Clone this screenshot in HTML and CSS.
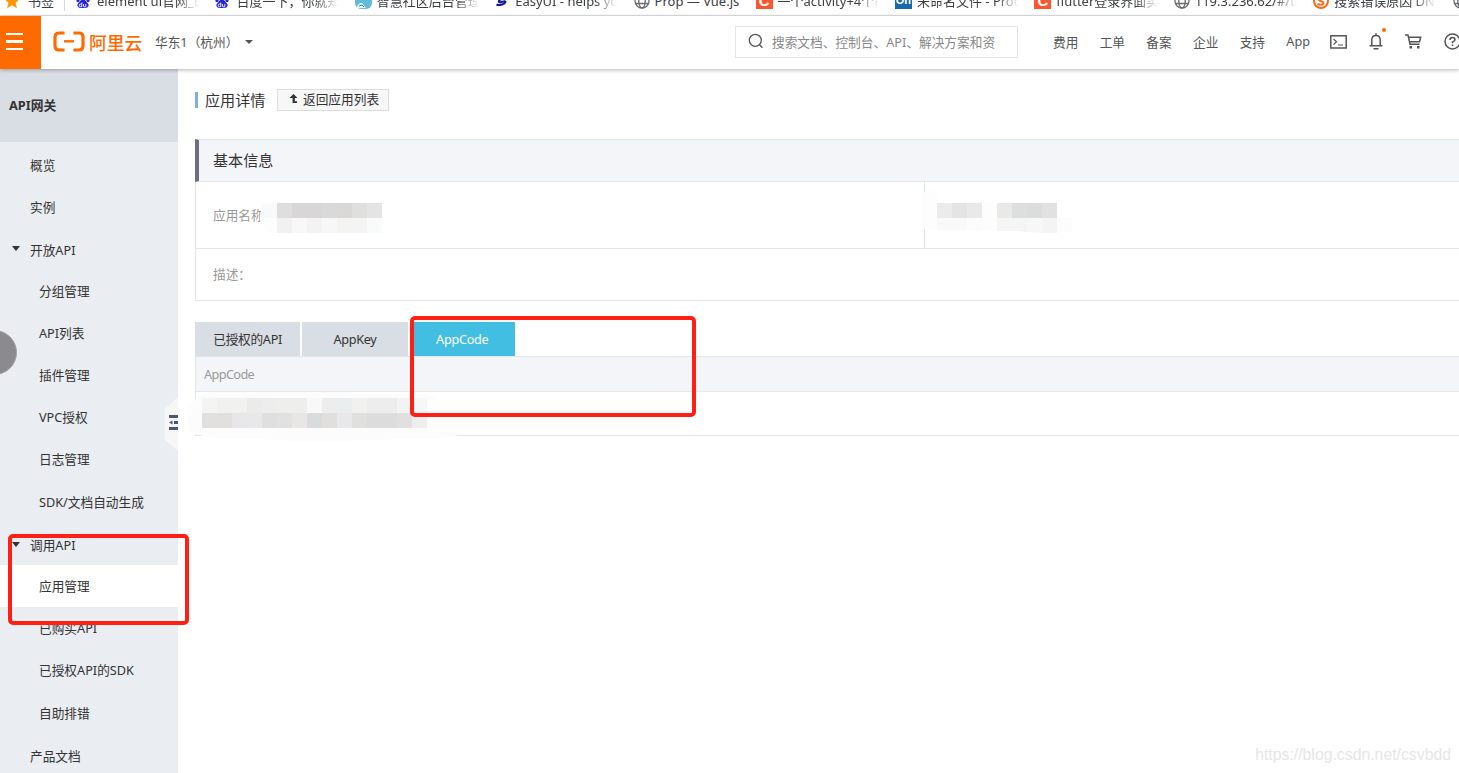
FILE: index.html
```html
<!DOCTYPE html>
<html lang="zh-CN">
  <head>
    <meta charset="UTF-8" />
    <meta name="viewport" content="width=device-width, initial-scale=1.0" />
    <title>API网关</title>
    <link rel="stylesheet" href="styles.css">
  </head>
  <body>
    <svg class="symbols">
      <symbol id="paw" viewBox="0 0 14 16">
        <ellipse cx="2" cy="7" rx="1.7" ry="2.3" />
        <ellipse cx="5" cy="3" rx="1.7" ry="2.5" />
        <ellipse cx="9" cy="3" rx="1.7" ry="2.5" />
        <ellipse cx="12" cy="7" rx="1.7" ry="2.3" />
        <path d="M7 6.5c2 0 3 2 4.500 3.500 3 3-.5 5.500-2.500 5H5c-2 .5-5.500-2-2.500-5C4 8.500 5 6.500 7 6.500z" />
        <path d="M5.800 9.500v4.200H4.500a1.200 1.200 0 0 1 0-2.700h1.300M7.500 11v2q0 .8.800.8h1.500V11" fill="none" stroke="#fff" stroke-width=".9" />
      </symbol>
      <symbol id="globe" viewBox="0 0 16 16">
        <g fill="none" stroke="#6b6d70" stroke-width="1.300">
          <circle cx="8" cy="8" r="7" />
          <ellipse cx="8" cy="8" rx="3.200" ry="7" />
          <path d="M1.500 5.500h13M1.500 10.500h13" />
        </g>
      </symbol>
    </svg>

    <div class="bookmarks">
      <div class="bookmarks-row">
        <div class="bookmark bookmark-first">
          <svg width="16" height="16" viewBox="0 0 16 16"><path fill="#ff9800" d="M8 .5l2.300 5 5.500.5-4.200 3.700 1.300 5.500L8 12.300l-4.900 2.900 1.300-5.500L.2 6l5.500-.5z" /></svg>
          <span>书签</span>
        </div>
        <div class="bookmark"><svg class="paw" width="14" height="16"><use href="#paw" /></svg><span>element ui官网_Element</span></div>
        <div class="bookmark"><svg class="paw" width="14" height="16"><use href="#paw" /></svg><span>百度一下，你就知道</span></div>
        <div class="bookmark">
          <svg width="17" height="16" viewBox="0 0 17 16"><rect width="17" height="16" rx="6" fill="#62b9d8" /><path d="M2 15c0-3 2-5 5-5l4 5z" fill="#e6f6fb" /><path d="M4 13l3-1 2 2" stroke="#2c8bb5" fill="none" /></svg>
          <span>智慧社区后台管理系统</span>
        </div>
        <div class="bookmark">
          <svg width="16" height="16" viewBox="0 0 16 16"><path d="M12 5C7 5 4 8 5 9s7-2 6.500 0-6 4-9 2.500" fill="none" stroke="#151a93" stroke-width="2" /></svg>
          <span>EasyUI - helps you build</span>
        </div>
        <div class="bookmark bookmark-short"><svg width="16" height="16"><use href="#globe" /></svg><span>Prop — Vue.js</span></div>
        <div class="bookmark"><i class="favicon favicon-c">C</i><span>一个activity+4个fragment</span></div>
        <div class="bookmark"><i class="favicon favicon-on">On</i><span>未命名文件 - ProcessOn</span></div>
        <div class="bookmark"><i class="favicon favicon-c">C</i><span>flutter登录界面实现</span></div>
        <div class="bookmark"><svg width="16" height="16"><use href="#globe" /></svg><span>119.3.236.62/#/table</span></div>
        <div class="bookmark">
          <svg width="16" height="16" viewBox="0 0 16 16"><circle cx="8" cy="8" r="7" fill="none" stroke="#f76b1c" stroke-width="2" /><path d="M11 5C8 3.500 5 4.500 5.500 6.500S11 8 10.500 10.200 6 12 4.500 10.800" fill="none" stroke="#f76b1c" stroke-width="2" /></svg>
          <span>搜索错误原因 DNS_PROBE</span>
        </div>
        <div class="bookmark"><svg width="16" height="16"><use href="#globe" /></svg></div>
      </div>
    </div>

    <header class="topbar">
      <div class="menu-button"><i></i><i></i><i></i></div>
      <div class="logo">
        <svg width="32" height="21" viewBox="0 0 32 21">
          <g fill="none" stroke="#ff6a00">
            <path d="M11.500 2H6Q2 2 2 6v9q0 4 4 4h5.500M20.500 2H26q4 0 4 4v9q0 4-4 4h-5.500" stroke-width="3.200" />
            <path d="M11 10.300h10" stroke-width="2.400" />
          </g>
        </svg>
        <span>阿里云</span>
      </div>
      <div class="region">华东1（杭州）<i class="caret"></i></div>
      <div class="search">
        <svg width="16" height="16" viewBox="0 0 16 16"><g fill="none" stroke="#555" stroke-width="1.300"><circle cx="7.300" cy="7.300" r="6" /><path d="M11.500 11.800l3 3" /></g></svg>
        <span>搜索文档、控制台、API、解决方案和资</span>
      </div>
      <nav class="topnav">
        <a>费用</a><a>工单</a><a>备案</a><a>企业</a><a>支持</a><a>App</a>
      </nav>
      <div class="tools">
        <svg width="17" height="14" viewBox="0 0 17 14"><g fill="none" stroke="#555" stroke-width="1.500"><rect x=".8" y=".8" width="15.400" height="12.200" /><path d="M3.500 4l3 2.800-3 2.800M8 10h5" stroke-width="1.200" /></g></svg>
        <div class="bell">
          <svg width="14" height="17" viewBox="0 0 14 17"><g fill="none" stroke="#555" stroke-width="1.500"><path d="M2.800 12.300V7q0-4.500 4.200-4.500T11.200 7v5.300M.5 12.700h13M7 .3v2M4.500 15.700h5" /></g></svg>
        </div>
        <svg width="17" height="15" viewBox="0 0 17 15"><g fill="none" stroke="#555" stroke-width="1.500"><path d="M0 1h3l2 9.200h9.500M3.400 3.200h12.300l-1.200 4.500H4.600" /></g><g fill="#555"><rect x="4.500" y="12" width="2.500" height="2.500" /><rect x="12" y="12" width="2.500" height="2.500" /></g></svg>
        <svg width="17" height="17" viewBox="0 0 17 17"><g fill="none" stroke="#555" stroke-width="1.500"><circle cx="8.500" cy="8.500" r="7.500" /><path d="M6 7q0-2.500 2.500-2.500T11 6.800Q11 8 8.500 9v1.200M8.500 11.500v1.500" stroke-width="1.600" /></g></svg>
      </div>
    </header>

    <div class="layout">
      <aside class="sidebar">
        <h2 class="sidebar-title">API网关</h2>
        <ul class="menu">
          <li class="menu-item">概览</li>
          <li class="menu-item">实例</li>
          <li class="menu-item menu-group">开放API</li>
          <li class="menu-item menu-sub">分组管理</li>
          <li class="menu-item menu-sub">API列表</li>
          <li class="menu-item menu-sub">插件管理</li>
          <li class="menu-item menu-sub">VPC授权</li>
          <li class="menu-item menu-sub">日志管理</li>
          <li class="menu-item menu-sub">SDK/文档自动生成</li>
          <li class="menu-item menu-group">调用API</li>
          <li class="menu-item menu-sub active">应用管理</li>
          <li class="menu-item menu-sub">已购买API</li>
          <li class="menu-item menu-sub">已授权API的SDK</li>
          <li class="menu-item menu-sub">自助排错</li>
          <li class="menu-item">产品文档</li>
        </ul>
      </aside>

      <main class="content">
        <div class="page-head">
          <h1>应用详情</h1>
          <button class="back-button">
            <svg width="9" height="9" viewBox="0 0 9 10"><path fill="#333" d="M4.500 0L9 4.500H6V8h2.500v2h-5V4.500H0z" /></svg>
            返回应用列表
          </button>
        </div>

        <section class="panel">
          <h3 class="panel-title">基本信息</h3>
          <div class="panel-row">
            <div class="panel-cell">应用名称</div>
            <div class="panel-cell panel-cell-id"></div>
          </div>
          <div class="panel-row panel-row-last">
            <div class="panel-cell">描述：</div>
          </div>
        </section>

        <div class="tabs">
          <div class="tab">已授权的API</div>
          <div class="tab">AppKey</div>
          <div class="tab tab-active">AppCode</div>
        </div>
        <div class="table">
          <div class="table-head">AppCode</div>
          <div class="table-body"></div>
        </div>
      </main>
    </div>

    <!-- collapse handle and floating ball -->
    <svg class="handle" width="13" height="54" viewBox="0 0 13 54">
      <path fill="#f7f7f7" d="M13 0v54L0 43V12z" />
      <path fill="#4a5870" d="M4 18h9v3H4zM4 30h9v3H4zM9 24h4v3H9zM7.500 23.500v4L4 25.500z" />
    </svg>
    <div class="ball"></div>

    <!-- masked values -->
    <svg class="mask mask-name" width="122" height="32" viewBox="0 0 122 32">
      <path fill="#fdfdfd" d="M2 0h15v30H10Q0 24 0 15z" />
      <rect x="2" y="1" width="15" height="14" fill="#f8f9f9" />
      <g>
        <rect x="17" width="15" height="15" fill="#dfdedf" /><rect x="32" width="30" height="15" fill="#d8d6d6" /><rect x="62" width="15" height="15" fill="#dad9d9" /><rect x="77" width="15" height="15" fill="#d9d8d7" /><rect x="92" width="15" height="15" fill="#dfdfdd" /><rect x="107" width="15" height="15" fill="#e3e4e3" />
        <rect x="17" y="15" width="15" height="15" fill="#f1f1f1" /><rect x="32" y="15" width="15" height="15" fill="#f8f8f8" /><rect x="47" y="15" width="15" height="15" fill="#f3f3f3" /><rect x="62" y="15" width="15" height="15" fill="#f7f7f7" /><rect x="77" y="15" width="15" height="15" fill="#f4f4f2" /><rect x="92" y="15" width="15" height="15" fill="#f4f4f4" /><rect x="107" y="15" width="15" height="15" fill="#f8fbfa" />
      </g>
    </svg>
    <svg class="mask mask-id" width="150" height="44" viewBox="0 0 150 44">
      <path fill="#fdfdfd" d="M0 3L15 0v41L0 37z" />
      <rect x="15" y="13" width="15" height="15" fill="#ebebea" /><rect x="30" y="13" width="15" height="15" fill="#e3e5e4" /><rect x="45" y="13" width="15" height="15" fill="#e9e9e8" />
      <rect x="60" y="13" width="15" height="28" fill="#fdfdfd" />
      <rect x="75" y="13" width="15" height="15" fill="#e9e9e7" /><rect x="90" y="13" width="15" height="15" fill="#dddee0" /><rect x="105" y="13" width="15" height="15" fill="#dbdddc" /><rect x="120" y="13" width="15" height="15" fill="#e1e1e1" />
      <path fill="#f9f9f9" d="M15 28h30v12H15z" /><path fill="#fcfcfc" d="M45 28h15v13H45zM135 28h15v14H135z" />
      <path fill="#f5f5f5" d="M75 28h30v14l-12-1H75z" /><path fill="#f7f7f7" d="M105 28h15v15l-15-1z" /><path fill="#f4f4f4" d="M120 28h15v15h-15z" />
    </svg>
    <svg class="mask mask-code" width="270" height="52" viewBox="0 0 270 52">
      <path fill="#fcfcfc" d="M12 5Q20 2 40 2h110q10 0 15 2h65q12 0 18 4l-8 4v30h25l5 3q-10 4-60 4-90 4-140 0-50 0-58-4l-10-2Q-2 26 2 14z" />
      <g>
        <rect x="14" y="8" width="15" height="15" fill="#f4f4f4" /><rect x="29" y="8" width="30" height="15" fill="#f1f1f0" /><rect x="59" y="8" width="15" height="15" fill="#ebebea" /><rect x="74" y="8" width="15" height="15" fill="#ededed" /><rect x="89" y="8" width="30" height="15" fill="#eeeeed" /><rect x="119" y="8" width="15" height="15" fill="#f8f8f8" /><rect x="134" y="8" width="15" height="15" fill="#ededed" /><rect x="149" y="8" width="15" height="15" fill="#ebeeee" /><rect x="164" y="8" width="15" height="15" fill="#f1f1ef" /><rect x="179" y="8" width="30" height="15" fill="#ecedec" /><rect x="209" y="8" width="15" height="15" fill="#f2f3f2" /><rect x="224" y="8" width="15" height="15" fill="#f7f7f7" />
        <rect x="14" y="23" width="30" height="15" fill="#e2e0df" /><rect x="44" y="23" width="15" height="15" fill="#e7e7ea" /><rect x="59" y="23" width="15" height="15" fill="#e8e8e8" /><rect x="74" y="23" width="15" height="15" fill="#dfdfdf" /><rect x="89" y="23" width="15" height="15" fill="#e1e1e1" /><rect x="104" y="23" width="15" height="15" fill="#e8e7e6" /><rect x="119" y="23" width="15" height="15" fill="#d9dcdc" /><rect x="134" y="23" width="15" height="15" fill="#e1dfde" /><rect x="149" y="23" width="15" height="15" fill="#e8e8eb" /><rect x="164" y="23" width="15" height="15" fill="#e0e0df" /><rect x="179" y="23" width="30" height="15" fill="#dbdcdb" /><rect x="209" y="23" width="15" height="15" fill="#e0e0e0" /><rect x="224" y="23" width="15" height="15" fill="#eeeeee" />
      </g>
    </svg>

    <!-- highlights -->
    <div class="marker marker-tab"></div>
    <div class="marker marker-menu"></div>
    <div class="watermark">https://blog.csdn.net/csvbdd</div>
  </body>
</html>
```
FILE: styles.css
```css
* {
  box-sizing: border-box;
}
body {
  position: relative;
  margin: 0;
  width: 1459px;
  height: 773px;
  overflow: hidden;
  background: #fff;
  color: #333;
  font-family: "Noto Sans", "Noto Sans CJK SC", sans-serif;
  font-size: 12.7px;
}
svg {
  display: block;
  flex: none;
}
.symbols {
  display: none;
}

/* browser bookmarks */
.bookmarks {
  display: flex;
  align-items: flex-end;
  height: 16px;
  overflow: hidden;
  border-bottom: 1px solid #e4e4e4;
}
.bookmarks-row {
  display: flex;
  align-items: center;
  flex: none;
  height: 29px;
  padding-left: 4px;
}
.bookmark {
  display: flex;
  align-items: center;
  flex: none;
  gap: 5px;
  width: 139.4px;
  font-size: 13px;
  line-height: 20px;
  color: #3c4043;
}
.bookmark span {
  width: 102px;
  height: 20px;
  overflow: hidden;
  white-space: nowrap;
  -webkit-mask-image: linear-gradient(to right, #000 78%, transparent);
  mask-image: linear-gradient(to right, #000 78%, transparent);
}
.bookmark-first {
  width: 61px;
  gap: 8px;
  margin-right: 11px;
  border-right: 1px solid #d5d7da;
}
.bookmark-short {
  width: 122px;
}
.bookmark-first span,
.bookmark-short span {
  width: auto;
  -webkit-mask-image: none;
  mask-image: none;
}
.paw {
  margin-right: 2px;
  fill: #2424d8;
}
.favicon {
  flex: none;
  width: 17px;
  height: 17px;
  overflow: hidden;
  color: #fff;
  font: bold 15px/17px "Liberation Sans", sans-serif;
  text-align: center;
}
.favicon-c {
  background: #fc5531;
}
.favicon-on {
  background: #1769a8;
  font-size: 11px;
}

/* console header */
.topbar {
  position: relative;
  display: flex;
  align-items: center;
  height: 53px;
  padding-bottom: 2px;
  background: #fff;
  color: #555;
  white-space: nowrap;
  box-shadow: 0 1px 4px rgba(0, 0, 0, 0.3);
}
.menu-button {
  display: flex;
  flex-direction: column;
  gap: 5px;
  width: 41px;
  height: 53px;
  margin-bottom: -2px;
  padding: 17px 0 0 6px;
  background: #ff6a00;
}
.menu-button i {
  width: 17px;
  height: 2.300px;
  background: #fff;
}
.logo {
  display: flex;
  align-items: center;
  gap: 4px;
  width: 114px;
  padding-left: 12px;
  color: #ff6a00;
  font-size: 17.8px;
  font-weight: 500;
}
.region {
  display: flex;
  align-items: center;
  width: 580px;
}
.caret {
  margin-left: 7px;
  border: 4.500px solid transparent;
  border-top-color: #555;
  border-bottom: 0;
}
.search {
  display: flex;
  align-items: center;
  gap: 8px;
  width: 283px;
  height: 32px;
  padding: 0 0 1px 12px;
  border: 1px solid #e6e6e6;
  color: #888;
}
.topnav {
  display: flex;
  gap: 21.300px;
  width: 277px;
  padding-left: 35px;
}
.tools {
  display: flex;
  align-items: center;
  margin-left: 35px;
  gap: 22px;
  width: 129px;
  overflow: hidden;
  padding: 6px 0;
}
.bell {
  position: relative;
}
.bell::after {
  content: "";
  position: absolute;
  top: -5px;
  right: -3px;
  width: 4px;
  height: 4px;
  border-radius: 50%;
  background: #ff6a00;
}

.layout {
  display: flex;
  height: 704px;
}

/* sidebar */
.sidebar {
  flex: none;
  width: 178px;
  background: #eaedf1;
}
.sidebar-title {
  height: 73px;
  margin: 0;
  padding-left: 9px;
  background: #d9dde4;
  font-size: 12.8px;
  line-height: 73px;
}
.menu {
  margin: 0;
  padding: 1px 0 0;
  list-style: none;
}
.menu-item {
  display: flex;
  align-items: center;
  position: relative;
  height: 42.200px;
  padding: 1px 0 0 30px;
}
.menu-sub {
  padding: 0 0 1px 39px;
}
.menu-group {
  padding-top: 2px;
}
.menu-group::before {
  content: "";
  position: absolute;
  left: 12px;
  top: 19px;
  border: 4.500px solid transparent;
  border-top: 5px solid #333;
  border-bottom: 0;
}
.active {
  padding-bottom: 0;
  background: #fff;
}

/* content */
.content {
  flex: 1;
  min-width: 0;
  padding: 19px 0 0 17px;
}
.page-head {
  display: flex;
  align-items: center;
  height: 23px;
}
.page-head h1 {
  width: 82px;
  margin: 0;
  padding-left: 7px;
  border-left: 3px solid #80b0e0;
  font-size: 15.1px;
  font-weight: 400;
  line-height: 16px;
}
.back-button {
  display: flex;
  align-items: center;
  gap: 5px;
  width: 112px;
  height: 22px;
  padding: 0 0 2px 11px;
  border: 1px solid #ddd;
  background: #f7f7f7;
  color: #333;
  font: inherit;
  white-space: nowrap;
}
.panel {
  height: 162px;
  margin-top: 28px;
  border: 1px solid #e1e6eb;
  border-right: 0;
  color: #999;
}
.panel-title {
  height: 43px;
  margin: -1px 0 0 -1px;
  padding-left: 14px;
  border-left: 4px solid #6d6d86;
  border-top: 1px solid #e1e6eb;
  border-bottom: 1px solid #e1e6eb;
  background: #f4f5f9;
  color: #333;
  font-size: 15.1px;
  font-weight: 400;
  line-height: 41px;
}
.panel-row {
  display: flex;
  height: 67px;
  border-bottom: 1px solid #e1e6eb;
}
.panel-row-last {
  height: 51px;
  border-bottom: 0;
}
.panel-cell {
  display: flex;
  align-items: center;
  flex: none;
  width: 729px;
  padding: 0 0 2px 17px;
  border-right: 1px solid #e1e6eb;
}
.panel-row-last .panel-cell {
  border-right: 0;
}
.panel-cell-id {
  flex: 1;
  width: auto;
  border-right: 0;
}
.tabs {
  display: flex;
  gap: 2px;
  margin-top: 21px;
}
.tab {
  width: 105.300px;
  height: 34px;
  background: #d9dde4;
  letter-spacing: -0.3px;
  line-height: 35px;
  text-align: center;
}
.tab-active {
  background: #43bee3;
  color: #fff;
}
.table {
  border: 1px solid #e1e6eb;
  border-right: 0;
}
.table-head {
  height: 35px;
  padding-left: 8px;
  border-bottom: 1px solid #e6e8ee;
  background: #f4f5f9;
  color: #999;
  letter-spacing: -0.6px;
  line-height: 35px;
}
.table-body {
  height: 43px;
}

/* layers over the page */
.handle {
  position: absolute;
  left: 165px;
  top: 397px;
}
.ball {
  position: absolute;
  left: -28px;
  top: 330px;
  width: 45px;
  height: 45px;
  border: 1px solid #a3a3a5;
  border-radius: 50%;
  background: #8b8b8d;
}
.mask {
  position: absolute;
}
.mask-name {
  left: 260px;
  top: 203px;
}
.mask-id {
  left: 922px;
  top: 190px;
}
.mask-code {
  left: 188px;
  top: 390px;
}
.marker {
  position: absolute;
  border: 4px solid #ff2015;
  border-radius: 5px;
}
.marker-tab {
  left: 410px;
  top: 316px;
  width: 286px;
  height: 101px;
}
.marker-menu {
  left: 8px;
  top: 534px;
  width: 181px;
  height: 91px;
}
.watermark {
  position: absolute;
  right: 8px;
  bottom: 9px;
  color: #e6e6e6;
  font: 15.8px/18px "Liberation Sans", sans-serif;
}
```
